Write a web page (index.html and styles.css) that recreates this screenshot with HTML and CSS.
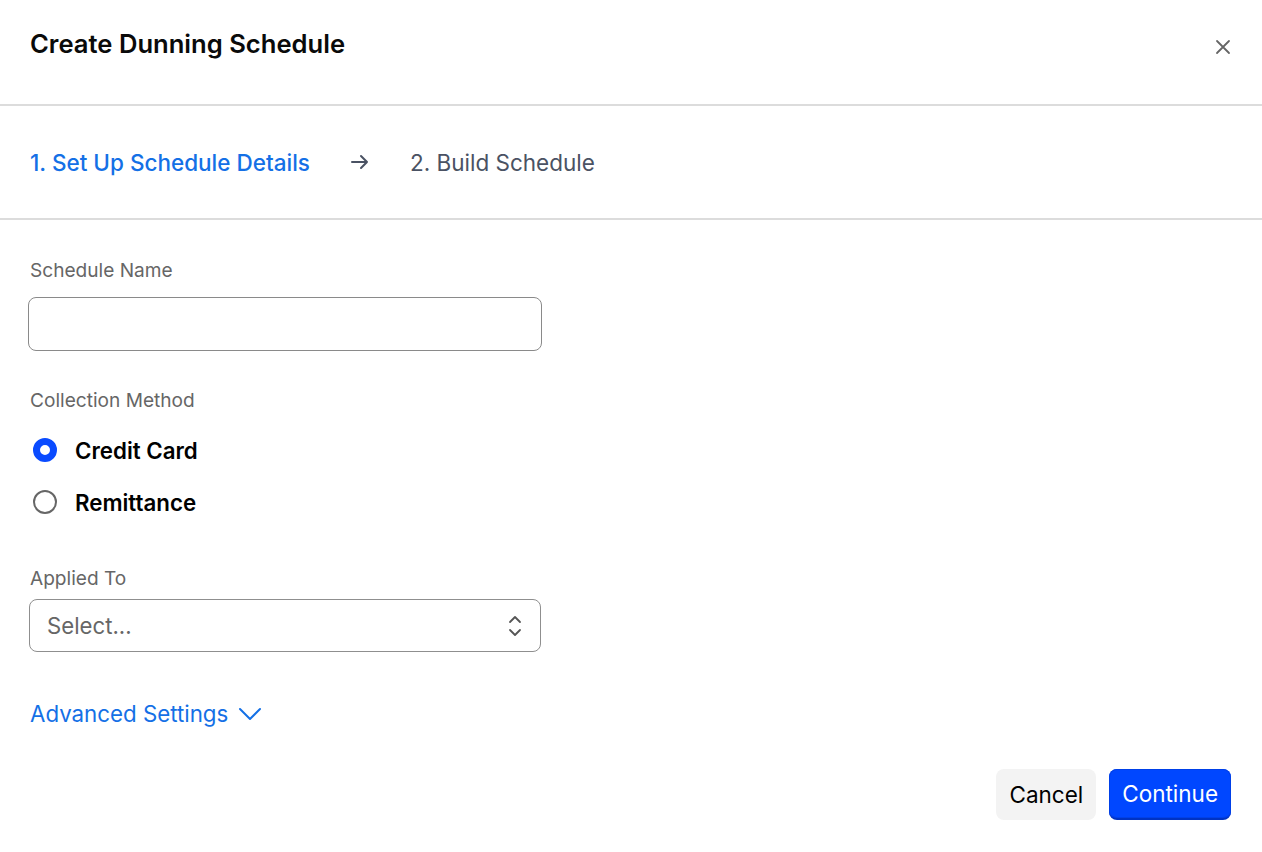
FILE: index.html
```html
<!DOCTYPE html>
<html>
<head>
<meta charset="utf-8">
<link rel="stylesheet" href="styles.css">
</head>
<body>
<div class="modal">
  <div class="header">
    <h1 class="title">Create Dunning Schedule</h1>
    <button class="close" aria-label="Close">
      <svg width="16" height="16" viewBox="0 0 16 16"><path d="M2 2 L14 14 M14 2 L2 14" stroke="#666" stroke-width="1.8" stroke-linecap="round"/></svg>
    </button>
  </div>
  <div class="steps">
    <span class="step active">1. Set Up Schedule Details</span>
    <svg class="arrow" width="20" height="20" viewBox="0 0 20 20"><path d="M2 10 H17 M11 4 L17 10 L11 16" fill="none" stroke="#4a5263" stroke-width="2" stroke-linecap="round" stroke-linejoin="round"/></svg>
    <span class="step">2. Build Schedule</span>
  </div>
  <div class="body">
    <div class="field">
      <label class="label">Schedule Name</label>
      <div class="input"></div>
    </div>
    <div class="field radios-field">
      <div class="label">Collection Method</div>
      <div class="radio-row"><span class="radio checked"></span><span class="radio-text">Credit Card</span></div>
      <div class="radio-row"><span class="radio"></span><span class="radio-text">Remittance</span></div>
    </div>
    <div class="field applied">
      <label class="label">Applied To</label>
      <div class="select">
        <span class="placeholder">Select...</span>
        <svg width="16" height="26" viewBox="0 0 16 26"><path d="M3 9 L8 4 L13 9 M3 17 L8 22 L13 17" fill="none" stroke="#555" stroke-width="1.8" stroke-linecap="round" stroke-linejoin="round"/></svg>
      </div>
    </div>
    <div class="advanced">
      <span>Advanced Settings</span>
      <svg width="24" height="16" viewBox="0 0 24 16"><path d="M2 3 L12 13 L22 3" fill="none" stroke="#1470e6" stroke-width="2" stroke-linecap="round" stroke-linejoin="round"/></svg>
    </div>
  </div>
  <div class="footer">
    <button class="btn cancel">Cancel</button>
    <button class="btn continue">Continue</button>
  </div>
</div>
</body>
</html>
```
FILE: styles.css
```css
html, body {
  margin: 0;
  padding: 0;
  background: #fff;
}
body {
  font-family: Inter, "Noto Sans", "Liberation Sans", sans-serif;
  color: #000;
}
.modal {
  width: 1262px;
  height: 852px;
  display: flex;
  flex-direction: column;
}
.header {
  height: 106px;
  box-sizing: border-box;
  display: flex;
  justify-content: space-between;
  align-items: flex-start;
  padding: 28px 30px 0 30px;
  border-bottom: 2px solid #dcdcdc;
}
.title {
  margin: 0;
  font-size: 25.6px;
  line-height: 32px;
  font-weight: 600;
  color: #0a0a0a;
}
.close {
  border: 0;
  background: none;
  padding: 0;
  margin-top: 11px;
  margin-right: 1px;
  width: 16px;
  height: 16px;
  display: flex;
}
.steps {
  height: 114px;
  box-sizing: border-box;
  display: flex;
  align-items: center;
  padding: 0 30px;
  border-bottom: 2px solid #dcdcdc;
}
.step {
  font-size: 22.5px;
  font-weight: 400;
  color: #4a5263;
}
.step.active {
  color: #1470e6;
  font-weight: 500;
}
.arrow {
  margin: 0 40px;
}
.body {
  padding: 38px 30px 0 30px;
  display: flex;
  flex-direction: column;
}
.field {
  display: flex;
  flex-direction: column;
}
.label {
  font-size: 19.1px;
  line-height: 24px;
  color: #666;
  font-weight: 400;
}
.input {
  margin-top: 15px;
  margin-left: -2px;
  width: 514px;
  height: 54px;
  box-sizing: border-box;
  border: 1.5px solid #8a8a8a;
  border-radius: 8px;
}
.radios-field {
  margin-top: 37px;
}
.radio-row {
  display: flex;
  align-items: center;
  height: 28px;
  margin-top: 24px;
}
.radio-row + .radio-row {
  margin-top: 24px;
}
.radio {
  width: 24px;
  height: 24px;
  box-sizing: border-box;
  border-radius: 50%;
  border: 2px solid #666;
  margin-left: 3px;
  margin-right: 18px;
}
.radio.checked {
  border: 7px solid #0a4bff;
}
.radio-text {
  font-size: 22.3px;
  font-weight: 600;
}
.applied {
  margin-top: 50px;
}
.select {
  margin-top: 9px;
  margin-left: -1px;
  width: 512px;
  height: 53px;
  box-sizing: border-box;
  border: 1px solid #8f8f8f;
  border-radius: 8px;
  display: flex;
  align-items: center;
  justify-content: space-between;
  padding: 0 17px 0 17px;
}
.placeholder {
  font-size: 22.2px;
  color: #666;
}
.advanced {
  margin-top: 48px;
  display: flex;
  align-items: center;
  gap: 10px;
  font-size: 22.3px;
  color: #1470e6;
}
.footer {
  margin-top: auto;
  display: flex;
  justify-content: flex-end;
  gap: 13px;
  padding: 0 31px 32px 0;
}
.btn {
  font-family: Inter, "Noto Sans", "Liberation Sans", sans-serif;
  font-size: 22.5px;
  height: 51px;
  border-radius: 8px;
  border: 0;
  padding: 0 13px;
}
.cancel {
  background: #f3f3f3;
  color: #000;
}
.continue {
  background: #0047ff;
  color: #fff;
  border-bottom: 2px solid #0033c4;
  box-shadow: inset 0 0 0 1px #0040e8;
}
```
